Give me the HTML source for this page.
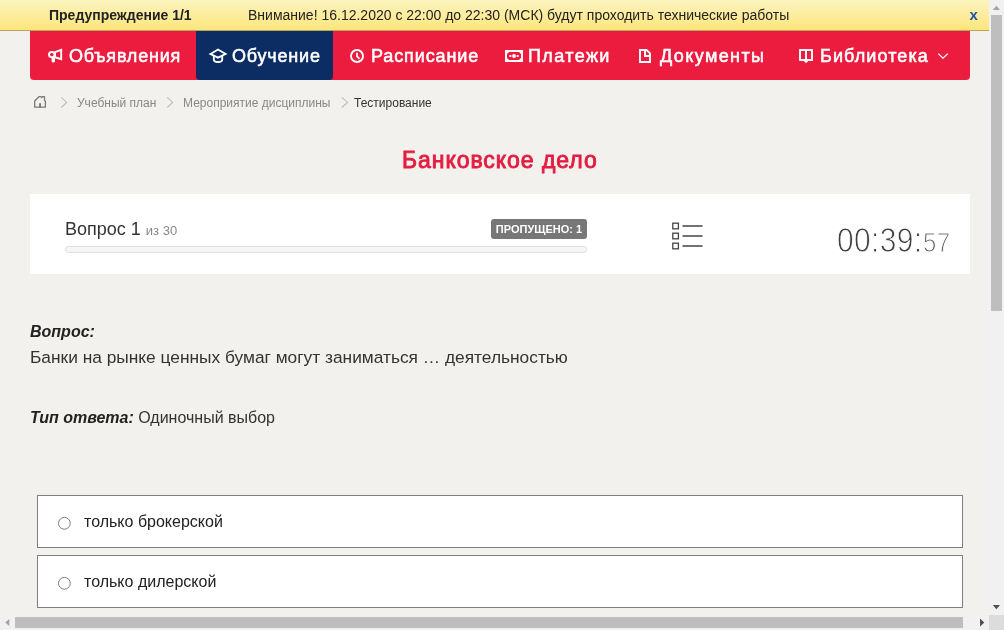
<!DOCTYPE html>
<html><head><meta charset="utf-8">
<style>
*{box-sizing:border-box;margin:0;padding:0}
html,body{width:1004px;height:630px;overflow:hidden;background:#f2f1ee;font-family:"Liberation Sans",sans-serif;color:#333}
.a{position:absolute;white-space:nowrap}
#warn{position:absolute;left:0;top:0;width:989px;height:31px;background:linear-gradient(#fcf3c0,#fde67c);border-bottom:1px solid #b9a65a}
#nav{position:absolute;left:30px;top:31px;width:940px;height:49px;background:#ec1c3f;border-radius:0 0 4px 4px}
#act{position:absolute;left:196px;top:31px;width:137px;height:49px;background:#0b2d64;border-radius:0 0 4px 4px}
.nt{font-size:18px;font-weight:normal;-webkit-text-stroke:0.55px #fff;color:#fff;top:45px;line-height:22px}
.bc{font-size:12px;color:#888;top:96px;line-height:14px}
#card{position:absolute;left:30px;top:194px;width:940px;height:80px;background:#fff}
.ans{position:absolute;left:37px;width:926px;height:53px;background:#fff;border:1px solid #7f7f7f}
.sb{position:absolute;background:#f1f1f1}
</style></head><body>
<div id="root" style="position:absolute;left:0;top:0;width:1004px;height:630px;will-change:transform">
<div id="warn"></div>
<div class="a" style="left:49px;top:7px;font-size:14px;font-weight:bold;color:#222;line-height:16px">Предупреждение 1/1</div>
<div class="a" style="left:248px;top:7px;font-size:14px;color:#222;line-height:16px">Внимание! 16.12.2020 с 22:00 до 22:30 (МСК) будут проходить технические работы</div>
<div class="a" style="left:969.5px;top:6px;font-size:15px;font-weight:bold;color:#1a55a0;line-height:18px">x</div>

<div id="nav"></div>
<div id="act"></div>
<svg class="a" style="left:0;top:0" width="989" height="80" viewBox="0 0 989 80">
 <g fill="none" stroke="#fff" stroke-width="1.9">
  <rect x="49" y="52" width="5.6" height="5.2" rx="2.6"/>
  <path d="M55 52.2 L61.2 49.8 V59.2 L55 57.2 Z"/>
  <path d="M210.5 54 L218 49.5 L225.5 54 L218 57.6 Z"/>
  <path d="M213.8 55.8 V59.5 Q213.8 62 218 62 Q222.2 62 222.2 59.5 V55.8"/>
  <circle cx="357" cy="56" r="6"/>
  <path d="M640 50 H646.6 L650 53.4 V62 H640 Z"/>
  <path d="M645 50 V56 H650"/>
  <rect x="800" y="50" width="12" height="10"/>
  <path d="M806 50 V61"/>
 </g>
 <rect x="51.6" y="57" width="3.4" height="5.6" rx="1.7" fill="#fff"/>
 <path d="M357 52.8 V56.3 L359.6 58.8" fill="none" stroke="#fff" stroke-width="1.7"/>
 <rect x="505" y="50" width="18" height="12" fill="#fff"/>
 <path d="M509 52 H519 L521 54 V58 L519 60 H509 L507 58 V54 Z" fill="#ec1c3f"/>
 <circle cx="514" cy="56" r="1.9" fill="#fff"/>
 <rect x="509.3" y="55" width="2" height="2" fill="#fff"/>
 <rect x="516.7" y="55" width="2" height="2" fill="#fff"/>
 <path d="M802.8 60 L806 63.2 L809.2 60 Z" fill="#fff"/>
 <path d="M938.2 53.6 L943 58.2 L947.8 53.6" fill="none" stroke="#fff" stroke-width="1.3"/>
</svg>
<div class="a nt" style="left:69px;letter-spacing:0.8px">Объявления</div>
<div class="a nt" style="left:232px;letter-spacing:0.8px">Обучение</div>
<div class="a nt" style="left:371px;letter-spacing:0.9px">Расписание</div>
<div class="a nt" style="left:528px;letter-spacing:1.4px">Платежи</div>
<div class="a nt" style="left:660px;letter-spacing:1.4px">Документы</div>
<div class="a nt" style="left:820px;letter-spacing:1.1px">Библиотека</div>

<svg class="a" style="left:0;top:85px" width="450" height="30" viewBox="0 85 450 30">
 <g fill="none" stroke="#7a7a7a" stroke-width="1.3">
  <path d="M34.7 107.2 V101 L38.9 96.7 H41 L41.8 97.7 L42.6 96.7 H44.5 V100.5 L45.4 101.2 V107.2 Z" stroke-linejoin="round"/>
 </g>
 <rect x="39.1" y="103.2" width="1.9" height="4.4" fill="#7a7a7a"/>
 <g fill="none" stroke="#bdbdbd" stroke-width="1.1">
  <path d="M61.3 97.3 L66.6 102.4 L61.3 107.5"/>
  <path d="M167.3 97.3 L172.6 102.4 L167.3 107.5"/>
  <path d="M341.8 97.3 L347.6 102.4 L341.8 107.5"/>
 </g>
</svg>
<div class="a bc" style="left:77px">Учебный план</div>
<div class="a bc" style="left:183px">Мероприятие дисциплины</div>
<div class="a bc" style="left:354px;color:#333">Тестирование</div>

<div class="a" style="left:402px;top:147px;font-size:23px;font-weight:normal;-webkit-text-stroke:0.9px #e41d40;letter-spacing:0.95px;color:#e41d40;line-height:26px">Банковское дело</div>

<div id="card"></div>
<div class="a" style="left:65px;top:218px;line-height:22px;font-size:18px;color:#333">Вопрос 1 <span style="font-size:13px;color:#888">из 30</span></div>
<div class="a" style="left:65px;top:246px;width:522px;height:7px;border:1px solid #dedede;border-radius:4px;background:#f6f6f6"></div>
<div class="a" style="left:491px;top:219px;width:96px;height:20px;background:#777;border-radius:3px;color:#fff;font-size:11px;font-weight:bold;line-height:20px;text-align:center">ПРОПУЩЕНО: 1</div>
<svg class="a" style="left:660px;top:215px" width="50" height="40" viewBox="660 215 50 40">
 <g fill="none" stroke="#444" stroke-width="1.3">
  <rect x="672.8" y="223.2" width="5.6" height="5.6"/>
  <rect x="672.8" y="233.2" width="5.6" height="5.6"/>
  <rect x="672.8" y="243.2" width="5.6" height="5.6"/>
  <path d="M682.5 226 H702.5 M682.5 236 H702.5 M682.5 246 H702.5"/>
 </g>
</svg>
<div class="a" style="left:837px;top:220px;letter-spacing:0.35px;font-size:30px;line-height:36px;color:#404040;-webkit-text-stroke:0.8px #fff;transform:scaleY(1.15);transform-origin:0 0">00:39:<span style="font-size:24px;color:#666;margin-left:0.5px">57</span></div>

<div class="a" style="left:30px;top:323px;font-size:16px;font-weight:bold;font-style:italic;color:#222;line-height:18px">Вопрос:</div>
<div class="a" style="left:30px;top:347px;font-size:17.33px;color:#333;line-height:20px">Банки на рынке ценных бумаг могут заниматься … деятельностью</div>
<div class="a" style="left:30px;top:409px;font-size:16px;color:#333;line-height:18px"><b style="font-style:italic;color:#222">Тип ответа:</b> Одиночный выбор</div>

<div class="ans" style="top:495px"></div>
<div class="ans" style="top:555px"></div>
<svg class="a" style="left:50px;top:510px" width="30" height="90" viewBox="50 510 30 90">
 <circle cx="64.4" cy="523.3" r="5.9" fill="#fff" stroke="#7d7d7d" stroke-width="1"/>
 <circle cx="64.4" cy="583.3" r="5.9" fill="#fff" stroke="#7d7d7d" stroke-width="1"/>
</svg>
<div class="a" style="left:84px;top:513px;font-size:16px;color:#222;line-height:18px">только брокерской</div>
<div class="a" style="left:84px;top:573px;font-size:16px;color:#222;line-height:18px">только дилерской</div>

<!-- scrollbars -->
<div class="sb" style="left:989px;top:0;width:15px;height:615px"></div>
<div class="a" style="left:991px;top:15px;width:11px;height:296px;background:#bebebe"></div>
<svg class="a" style="left:989px;top:0" width="15" height="615" viewBox="989 0 15 615">
 <path d="M992.8 10 L996.4 5.8 L1000 10 Z" fill="#a3a3a3"/>
 <path d="M992.8 605 L996.4 609.3 L1000 605 Z" fill="#505050"/>
</svg>
<div class="sb" style="left:0;top:615px;width:989px;height:15px"></div>
<div class="a" style="left:15px;top:617px;width:948px;height:11px;background:#bebebe"></div>
<div class="a" style="left:989px;top:615px;width:15px;height:15px;background:#dcdcdc"></div>
<svg class="a" style="left:0;top:615px" width="989" height="15" viewBox="0 615 989 15">
 <path d="M9.3 619 L5.2 622.5 L9.3 626 Z" fill="#a3a3a3"/>
 <path d="M980 618.6 L984.3 622.5 L980 626.4 Z" fill="#505050"/>
</svg>
</div>
</body></html>
